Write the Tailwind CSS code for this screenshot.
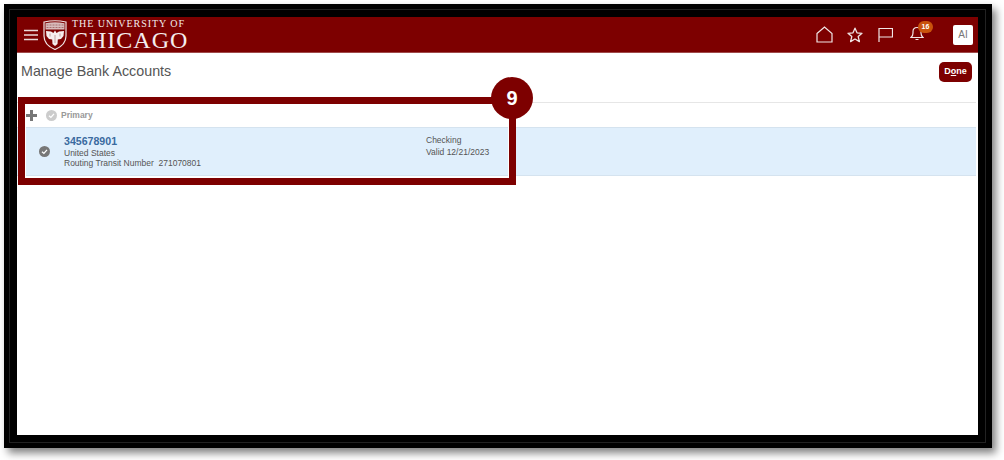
<!DOCTYPE html>
<html lang="en">
<head>
    <meta charset="UTF-8">
    <title>Manage Bank Accounts</title>
    <script src="https://cdn.jsdelivr.net/npm/@tailwindcss/browser@4"></script>
</head>
<body class="bg-white w-[1004px] h-[460px] overflow-hidden font-['Liberation_Sans',Arial,sans-serif]">

    <!-- framed screenshot -->
    <div class="ml-[4px] mt-[4px] w-[988px] h-[444px] bg-black p-[5px] shadow-[4px_5px_8px_rgba(0,0,0,0.5)]">
        <div class="w-[977px] h-[434px] border border-[#222] p-[7px]">
        <div class="relative w-[961px] h-[418px] bg-white">

            <!-- header -->
            <header class="flex items-center h-[36px] bg-[#7d0000] border-b border-[#a04a4a] pl-[7px] pr-[5px] text-white">
                <svg class="w-[14px] h-[12px]" viewBox="0 0 14 12" stroke="#ead9d9" stroke-width="1.6"><path d="M0 1.5h14M0 6h14M0 10.5h14"/></svg>
                <svg class="ml-[5px] w-[24px] h-[30px]" viewBox="0 0 24 30">
                    <path d="M1 2 Q12 -0.5 23 2 V16 Q23 25 12 29.5 Q1 25 1 16Z" fill="#7d0000" stroke="#f0e4e4" stroke-width="1.2"/>
                    <path d="M2.5 3.2 Q12 1.2 21.5 3.2 V9.5 H2.5Z" fill="#d8bcbc"/>
                    <path d="M3.5 5h17M3.5 7.5h17" stroke="#9c5a5a" stroke-width="0.8" stroke-dasharray="2 1"/>
                    <path d="M12 10.5 L13.6 13 L16 11.5 L21 11 L20.5 16 L18 19 L14.8 19.5 L14.5 24 L12 26 L9.5 24 L9.2 19.5 L6 19 L3.5 16 L3 11 L8 11.5 L10.4 13Z" fill="#f6eeee"/>
                    <path d="M12 15v8M7 13.5v3M17 13.5v3" stroke="#b98a8a" stroke-width="0.8"/>
                </svg>
                <div class="ml-[5px] w-[118px] font-['Liberation_Serif',serif] text-[#f4eded]">
                    <div class="text-[10px] leading-[10px] tracking-[0.95px] whitespace-nowrap">THE UNIVERSITY OF</div>
                    <div class="mt-[1px] text-[24px] leading-[21px] tracking-[1px] whitespace-nowrap">CHICAGO</div>
                </div>

                <div class="ml-auto flex items-center">
                    <svg class="w-[17px] h-[17px]" viewBox="0 0 17 17" fill="none" stroke="#f1e6e6" stroke-width="1.2"><path d="M1 7.5 L8.5 1 L16 7.5 V16 H1Z"/></svg>
                    <svg class="ml-[14px] w-[16px] h-[16px]" viewBox="0 0 16 16" fill="none" stroke="#f1e6e6" stroke-width="1.3" stroke-linejoin="round"><path d="M8 1.2 L10 5.8 L15 6.3 L11.2 9.6 L12.4 14.6 L8 12 L3.6 14.6 L4.8 9.6 L1 6.3 L6 5.8Z"/></svg>
                    <svg class="ml-[15px] w-[15px] h-[15px]" viewBox="0 0 15 15" fill="none" stroke="#f1e6e6" stroke-width="1.2"><path d="M1 15 V1.5 H14.5 V10 H1"/></svg>
                    <div class="relative ml-[17px] w-[24px] h-[17px]">
                        <svg class="w-[14px] h-[15px]" viewBox="0 0 14 15" fill="none" stroke="#f1e6e6" stroke-width="1.2"><path d="M1 11.5 Q3 10 3 7 V5.5 Q3 1.5 7 1.5 Q11 1.5 11 5.5 V7 Q11 10 13 11.5Z M5.5 13.5 H8.5"/></svg>
                        <span class="absolute left-[8px] top-[-5px] w-[15px] h-[12px] rounded-full bg-[#c9530c] text-white text-[7px] leading-[12px] font-bold text-center">16</span>
                    </div>
                    <div class="ml-[19px] w-[20px] h-[20px] rounded-[2px] bg-white text-[#777] text-[10px] leading-[20px] text-center">AI</div>
                </div>
            </header>

            <!-- page title -->
            <div class="flex items-start justify-between h-[49px] pl-[4px] pr-[6px] pt-[9px]">
                <h1 class="text-[14.3px] leading-[18px] text-[#555]">Manage Bank Accounts</h1>
                <button class="w-[33px] h-[20px] rounded-[5px] bg-[#7d0000] text-white text-[9px] font-bold">D<span class="underline">o</span>ne</button>
            </div>

            <!-- toolbar -->
            <div class="flex items-center h-[25px] mr-[2px] border-t border-[#e6e6e6] pl-[9px]">
                <svg class="w-[11px] h-[11px]" viewBox="0 0 11 11"><path d="M4 0h3v4h4v3H7v4H4V7H0V4h4z" fill="#777"/></svg>
                <svg class="ml-[9px] w-[11px] h-[11px]" viewBox="0 0 11 11"><circle cx="5.5" cy="5.5" r="5.5" fill="#ccc"/><path d="M3 5.7 L4.9 7.4 L8 3.9" fill="none" stroke="#fff" stroke-width="1.3"/></svg>
                <span class="ml-[4px] text-[8.5px] font-bold text-[#999]">Primary</span>
            </div>

            <!-- bank account row -->
            <div class="flex h-[49px] mr-[2px] bg-[#e0effc] border-y border-[#d5e3ef] text-[8.5px] leading-[10px] text-[#555]">
                <div class="w-[47px] pl-[22px] pt-[18px]">
                    <svg class="w-[11px] h-[11px]" viewBox="0 0 11 11"><circle cx="5.5" cy="5.5" r="5.5" fill="#777"/><path d="M3 5.7 L4.9 7.4 L8 3.9" fill="none" stroke="#fff" stroke-width="1.3"/></svg>
                </div>
                <div class="w-[362px] pt-[7px]">
                    <div class="text-[10.6px] leading-[13px] font-bold text-[#3a6a9f]">345678901</div>
                    <div>United States</div>
                    <div>Routing Transit Number&nbsp; 271070801</div>
                </div>
                <div class="pt-[6px]">
                    <div class="leading-[13px]">Checking</div>
                    <div>Valid 12/21/2023</div>
                </div>
            </div>

            <!-- callout over the content -->
            <div class="absolute left-[1px] top-[80px] w-[498px] h-[88px] border-[7px] border-[#7d0000] shadow-[inset_0_0_0_1px_#fff]"></div>
            <div class="absolute left-[474px] top-[60px] w-[42px] h-[42px] rounded-full bg-[#7d0000] text-white text-[20px] leading-[42px] font-bold text-center">9</div>
        </div>
        </div>
    </div>

</body>
</html>
